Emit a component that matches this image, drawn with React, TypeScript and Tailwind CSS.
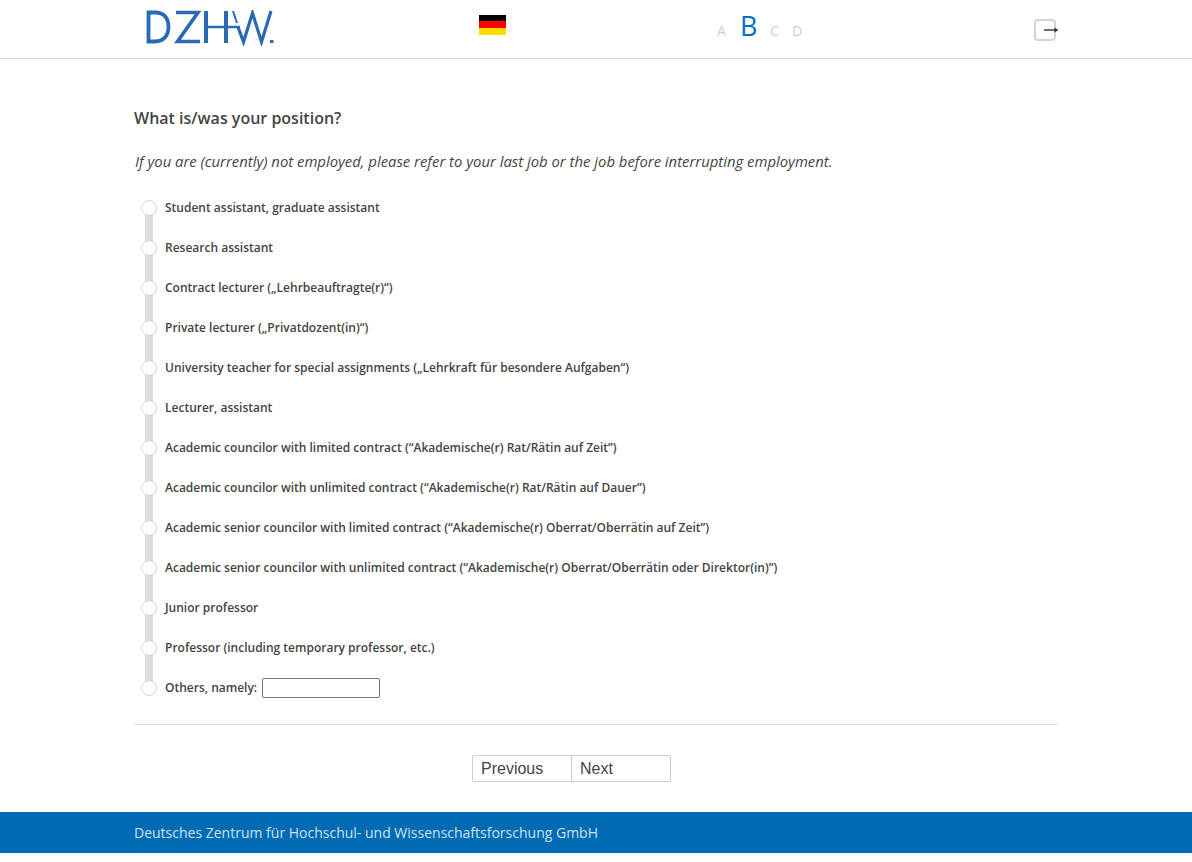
const options = [
  "Student assistant, graduate assistant",
  "Research assistant",
  "Contract lecturer („Lehrbeauftragte(r)“)",
  "Private lecturer („Privatdozent(in)“)",
  "University teacher for special assignments („Lehrkraft für besondere Aufgaben“)",
  "Lecturer, assistant",
  "Academic councilor with limited contract (“Akademische(r) Rat/Rätin auf Zeit”)",
  "Academic councilor with unlimited contract (“Akademische(r) Rat/Rätin auf Dauer”)",
  "Academic senior councilor with limited contract (“Akademische(r) Oberrat/Oberrätin auf Zeit”)",
  "Academic senior councilor with unlimited contract (“Akademische(r) Oberrat/Oberrätin oder Direktor(in)”)",
  "Junior professor",
  "Professor (including temporary professor, etc.)",
];

function Logo() {
  return (
    <svg width="130" height="36" viewBox="0 0 130 36" className="block" fill="none" stroke="#2a6ab5">
      <path d="M2.500 2.500V31.500H9C18 31.500 22.500 25 22.500 17C22.500 8 18 2.500 9 2.500Z" strokeWidth="3.800" />
      <path d="M30 2.500H52L31.500 31.500H54" strokeWidth="3.600" />
      <path d="M60 1V33M80 1V33" strokeWidth="4" />
      <path d="M60 17H94" strokeWidth="2.600" />
      <path d="M87 1L91 13" strokeWidth="2" />
      <path d="M92 17L97.500 32L106.500 3L115.500 32L125 1" strokeWidth="3.200" />
      <rect x="124" y="30" width="3.500" height="3" fill="#2a6ab5" stroke="none" />
    </svg>
  );
}

function Flag() {
  return (
    <div className="flex h-5 w-[27px] flex-col">
      <div className="h-[6px] bg-black" />
      <div className="h-[7px] bg-[#ff0000]" />
      <div className="h-[7px] bg-[#ffdd00]" />
    </div>
  );
}

function Radio() {
  return <span className="relative z-10 h-4 w-4 shrink-0 rounded-full border border-[#d5d5d5] bg-white" />;
}

export default function App() {
  return (
    <div className="bg-white font-['Open_Sans',sans-serif] text-[#444]">
      <header className="h-[59px] border-b border-[#ddd]">
        <div className="relative mx-auto h-full w-[924px]">
          <div className="flex h-full items-start">
            <div className="ml-[12px] mt-[10px] w-[333px] shrink-0">
              <Logo />
            </div>
            <div className="mt-[15px] w-[238px] shrink-0">
              <Flag />
            </div>
            <div className="flex h-[40px] items-end font-normal text-[#b8d4ec]">
              <span className="w-[23px] text-[14px] leading-[18px]">A</span>
              <span className="-mb-[1px] w-[30px] text-[27px] leading-[30px] font-medium text-[#0070c0]">B</span>
              <span className="w-[22px] text-[14px] leading-[18px]">C</span>
              <span className="text-[14px] leading-[18px]">D</span>
            </div>
            <div className="ml-auto mr-[2px] mt-[19px]">
              <div className="relative h-[22px] w-[22px] rounded-[4px] border-2 border-[#d4d4d4]">
                <svg width="16" height="8" viewBox="0 0 16 8" className="absolute -right-[5px] top-[5px]">
                  <path d="M1 4H12" stroke="#333" strokeWidth="1.400" />
                  <path d="M11.500 1.500L15.500 4L11.500 6.500Z" fill="#333" />
                </svg>
              </div>
            </div>
          </div>
        </div>
      </header>

      <main className="mx-auto w-[924px]">
        <h1 className="mt-[48px] text-[16px] leading-[22px] font-semibold">What is/was your position?</h1>
        <p className="mt-[21px] ml-[1px] text-[14.850px] leading-[22px] italic">
          If you are (currently) not employed, please refer to your last job or the job before interrupting employment.
        </p>

        <div className="relative mt-[28px] ml-[7px]">
          <div className="absolute top-[8px] bottom-[12px] left-[4px] w-2 bg-[#dddddd]" />
          {options.map((o) => (
            <div key={o} className="flex h-10 items-start">
              <Radio />
              <span className="ml-[8px] text-[12px] leading-[16px] font-semibold text-[#444]">{o}</span>
            </div>
          ))}
          <div className="flex h-[26px] items-start">
            <Radio />
            <span className="ml-[8px] text-[12px] leading-[16px] font-semibold text-[#444]">Others, namely:</span>
            <input className="-mt-[2px] ml-[5px] h-5 w-[118px] rounded-[2px] border border-[#767676] bg-white" />
          </div>
        </div>

        <div className="mt-[18px] border-t border-[#ddd]" />

        <div className="mt-[30px] flex">
          <div className="ml-[338px] flex h-[27px] w-[199px] rounded-[2px] border border-[#ccc] font-['Liberation_Sans',sans-serif] text-[16px] leading-[25px] text-[#444]">
            <button className="w-[99px] border-r border-[#ccc] pl-2 text-left">Previous</button>
            <button className="flex-1 pl-2 text-left">Next</button>
          </div>
        </div>
      </main>

      <footer className="mt-[30px] h-[41px] bg-[#006ab3]">
        <div className="mx-auto w-[924px] text-[14px] leading-[41px] text-[#cfe3f3]">
          Deutsches Zentrum für Hochschul- und Wissenschaftsforschung GmbH
        </div>
      </footer>
    </div>
  );
}
